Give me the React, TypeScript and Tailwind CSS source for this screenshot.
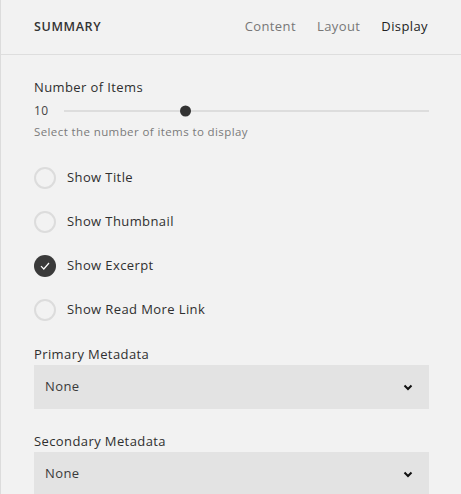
import { useState } from "react";

const options = [
  { label: "Show Title", checked: false },
  { label: "Show Thumbnail", checked: false },
  { label: "Show Excerpt", checked: true },
  { label: "Show Read More Link", checked: false },
];

function Select({ label }: { label: string }) {
  return (
    <div className="flex flex-col">
      <label className="text-[13px] font-medium text-[#2f2f2f] h-[22px] leading-[22px]">{label}</label>
      <div className="h-[44px] bg-[#e3e3e3] flex items-center justify-between pl-[11px] pr-[16px]">
        <span className="text-[13px] text-[#3a3a3a]">None</span>
        <svg width="10" height="7" viewBox="0 0 10 7" fill="none">
          <path d="M1.5 1.5 L5 5 L8.5 1.5" stroke="#111" strokeWidth="2" />
        </svg>
      </div>
    </div>
  );
}

export default function App() {
  const [items] = useState(options);

  return (
    <div className="w-[461px] h-[494px] overflow-hidden bg-[#f2f2f2] border-l border-[#dcdcdc] font-['Open_Sans',sans-serif] tracking-[0.025em]">
      <header className="h-[55px] border-b border-[#dedede] flex items-center justify-between pl-[33px] pr-[33px]">
        <h1 className="text-[12.5px] font-semibold tracking-[0.05em] text-[#333]">SUMMARY</h1>
        <nav className="flex gap-[21px] text-[13px]">
          <span className="text-[#777]">Content</span>
          <span className="text-[#777]">Layout</span>
          <span className="text-[#222] font-medium">Display</span>
        </nav>
      </header>

      <section className="pl-[33px] pr-[32px] pt-[23px] flex flex-col">
        <div className="text-[13px] font-medium text-[#2f2f2f] h-[18px] leading-[18px]">Number of Items</div>
        <div className="flex items-center h-[22px] mt-[4px]">
          <span className="text-[12px] text-[#444] w-[30px]">10</span>
          <div className="relative flex-1 h-[2px] bg-[#dddddd]">
            <div className="absolute top-1/2 left-[116px] -translate-y-1/2 w-[11px] h-[11px] rounded-full bg-[#333]" />
          </div>
        </div>
        <div className="text-[11.5px] text-[#7a7a7a] mt-[1px] h-[18px] leading-[18px]">Select the number of items to display</div>

        <div className="flex flex-col gap-[22px] mt-[26px]">
          {items.map((o) => (
            <div key={o.label} className="flex items-center gap-[11px] h-[22px]">
              {o.checked ? (
                <span className="w-[22px] h-[22px] rounded-full bg-[#3a3a3a] flex items-center justify-center">
                  <svg width="10" height="8" viewBox="0 0 10 8" fill="none">
                    <path d="M1 4.2 L3.8 7 L9 1" stroke="#fff" strokeWidth="1.2" />
                  </svg>
                </span>
              ) : (
                <span className="w-[22px] h-[22px] rounded-full border-2 border-[#dcdcdc]" />
              )}
              <span className="text-[13px] font-medium text-[#2f2f2f]">{o.label}</span>
            </div>
          ))}
        </div>

        <div className="mt-[22px] flex flex-col gap-[21px]">
          <Select label="Primary Metadata" />
          <Select label="Secondary Metadata" />
        </div>
      </section>
    </div>
  );
}
